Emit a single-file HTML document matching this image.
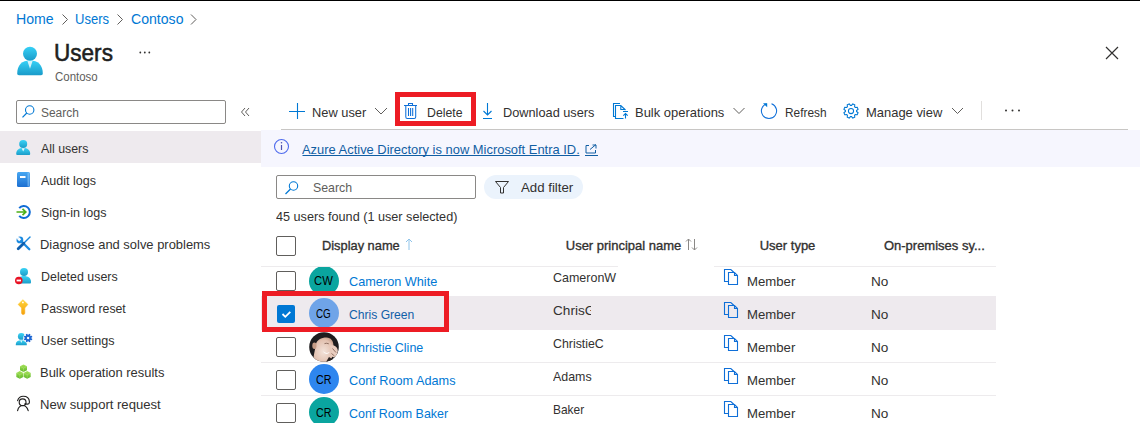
<!DOCTYPE html>
<html><head><meta charset="utf-8"><style>
html,body{margin:0;padding:0;}
body{width:1140px;height:423px;position:relative;overflow:hidden;background:#fff;font-family:"Liberation Sans",sans-serif;}
.t{position:absolute;white-space:nowrap;line-height:0;transform-origin:0 0;}
.a{position:absolute;}
svg{position:absolute;overflow:visible;}
</style></head><body>
<div class="a" style="left:0;top:0;width:1140px;height:1px;background:#000"></div>
<!-- header icon -->
<svg style="left:17px;top:46px" width="26" height="30" viewBox="0 0 26 30">
 <defs><linearGradient id="gU" x1="0" y1="0" x2="0" y2="1"><stop offset="0" stop-color="#36d1f7"/><stop offset="1" stop-color="#1a9bc9"/></linearGradient></defs>
 <circle cx="13" cy="7.7" r="7" fill="url(#gU)"/>
 <path d="M0.2 27.5 C0.2 19 5 14.5 13 14.5 C21 14.5 25.8 19 25.8 27.5 C25.8 28.6 25 29.2 24 29.2 H2 C1 29.2 0.2 28.6 0.2 27.5Z" fill="url(#gU)"/>
 <path d="M10.4 15 L13 22.8 L15.6 15Z" fill="#e8f8fd" opacity="0.9"/>
</svg>
<!-- ellipsis title -->
<svg style="left:139px;top:51px" width="12" height="3" viewBox="0 0 12 3"><circle cx="1.3" cy="1.5" r="0.9" fill="#323130"/><circle cx="5.8" cy="1.5" r="0.9" fill="#323130"/><circle cx="10.3" cy="1.5" r="0.9" fill="#323130"/></svg>
<!-- breadcrumb chevrons -->
<svg style="left:0;top:0" width="1" height="1">
 <path d="M62.5 14.5 L67.5 19.5 L62.5 24.5" fill="none" stroke="#605e5c" stroke-width="1"/>
 <path d="M117.5 14.5 L122.5 19.5 L117.5 24.5" fill="none" stroke="#605e5c" stroke-width="1"/>
 <path d="M191 14.5 L196 19.5 L191 24.5" fill="none" stroke="#605e5c" stroke-width="1"/>
</svg>
<!-- close X -->
<svg style="left:0;top:0" width="1" height="1"><path d="M1106 47 L1118 59 M1118 47 L1106 59" stroke="#323130" stroke-width="1.2"/></svg>
<!-- sidebar search -->
<div class="a" style="left:16px;top:100px;width:208px;height:22px;border:1px solid #8a8886;border-radius:2px"></div>
<svg style="left:0;top:0" width="1" height="1"><circle cx="29.7" cy="110" r="4.2" fill="none" stroke="#0078d4" stroke-width="1.1"/><path d="M26.8 113 L22.5 117.3" stroke="#0078d4" stroke-width="1.2"/></svg>
<!-- collapse chevrons -->
<svg style="left:0;top:0" width="1" height="1"><path d="M245 108 L241.5 112 L245 116 M249 108 L245.5 112 L249 116" fill="none" stroke="#605e5c" stroke-width="1"/></svg>
<!-- sidebar selected -->
<div class="a" style="left:0;top:131px;width:261px;height:32px;background:#eeeaee"></div>
<!-- toolbar -->
<div class="a" style="left:281px;top:129px;width:847px;height:1px;background:#c8c6c4"></div>
<svg style="left:0;top:0" width="1" height="1">
 <path d="M297.5 103 V119 M289 111.5 H305" stroke="#0078d4" stroke-width="1.1"/>
 <path d="M375 108 L381 114 L387 108" fill="none" stroke="#605e5c" stroke-width="1"/>
 <!-- trash -->
 <path d="M404 105.5 H417 M408.5 105.5 V103.5 H412.5 V105.5 M405.8 105.5 V117 Q405.8 118.5 407.3 118.5 H414.2 Q415.7 118.5 415.7 117 V105.5 M408.5 108 V116 M410.6 108 V116 M412.7 108 V116" fill="none" stroke="#0f6fd8" stroke-width="1.05"/>
 <!-- download -->
 <path d="M487.5 103 V115 M483.5 111 L487.5 115 L491.5 111 M483 118.5 H492" fill="none" stroke="#0078d4" stroke-width="1.1"/>
 <!-- bulk ops -->
 <path d="M615 116.5 H613.5 V103.5 H620" fill="none" stroke="#0078d4" stroke-width="1.1"/>
 <path d="M623.5 118.5 H615.5 V105.5 H620.8 L625.5 110 M620.8 105.5 V109.5 H625.5 M623 111.5 H628 M625.5 118.5 V113.5 M623.3 115.7 L625.5 113.5 L627.7 115.7" fill="none" stroke="#0078d4" stroke-width="1.1"/>
 <path d="M733.5 108 L739 113.5 L744.5 108" fill="none" stroke="#605e5c" stroke-width="1"/>
 <!-- refresh -->
 <path d="M771.5 103.8 A7.6 7.6 0 1 1 766.5 103.8" fill="none" stroke="#0f6fd8" stroke-width="1.05"/>
 <path d="M763 103.2 H767.2 V107.2Z" fill="#0078d4"/>
 <path d="M952 108 L957.5 113.5 L963 108" fill="none" stroke="#605e5c" stroke-width="1"/>
 <path d="M981.5 101 V120" stroke="#e1dfdd" stroke-width="1"/>
 <circle cx="1006" cy="110.5" r="1" fill="#323130"/><circle cx="1012.5" cy="110.5" r="1" fill="#323130"/><circle cx="1019" cy="110.5" r="1" fill="#323130"/>
</svg>
<svg style="left:843.3px;top:102.7px" width="16" height="16" viewBox="0 0 16 16"><g transform="rotate(22.5 8 8)"><path d="M13.35 6.35 L15.22 6.91 L15.22 9.09 L13.35 9.65 L12.95 10.62 L13.87 12.34 L12.34 13.87 L10.62 12.95 L9.65 13.35 L9.09 15.22 L6.91 15.22 L6.35 13.35 L5.38 12.95 L3.66 13.87 L2.13 12.34 L3.05 10.62 L2.65 9.65 L0.78 9.09 L0.78 6.91 L2.65 6.35 L3.05 5.38 L2.13 3.66 L3.66 2.13 L5.38 3.05 L6.35 2.65 L6.91 0.78 L9.09 0.78 L9.65 2.65 L10.62 3.05 L12.34 2.13 L13.87 3.66 L12.95 5.38Z" fill="none" stroke="#0078d4" stroke-width="1.05"/></g><circle cx="8" cy="8" r="2.6" fill="none" stroke="#0078d4" stroke-width="1.05"/></svg>
<!-- info bar -->
<div class="a" style="left:261px;top:130px;width:879px;height:37px;background:#f6f6fe"></div>
<svg style="left:0;top:0" width="1" height="1">
 <circle cx="281.5" cy="146.5" r="7" fill="none" stroke="#4f6bed" stroke-width="1.1"/>
 <path d="M281.5 145 V150" stroke="#4f52b2" stroke-width="1.2"/><circle cx="281.5" cy="142.7" r="0.8" fill="#4f52b2"/>
 <path d="M302.5 155.5 H579.5 M585 155.5 H598" stroke="#115ea3" stroke-width="1"/>
 <path d="M589 145.5 H586 V153 H595.5 V150 M590 149.5 L596 144.5 M592.5 145 H596 V148.5" fill="none" stroke="#115ea3" stroke-width="1"/>
</svg>
<!-- filter search -->
<div class="a" style="left:276px;top:175px;width:198px;height:22px;border:1px solid #8a8886;border-radius:2px"></div>
<svg style="left:0;top:0" width="1" height="1"><circle cx="293.5" cy="186" r="4.2" fill="none" stroke="#0078d4" stroke-width="1.1"/><path d="M290.5 189 L285.5 194" stroke="#0078d4" stroke-width="1.2"/></svg>
<div class="a" style="left:484px;top:175px;width:99px;height:24px;border-radius:12px;background:#ebf3fc"></div>
<svg style="left:0;top:0" width="1" height="1"><path d="M495.5 181.5 H508.5 L503.5 187.5 V193 H500.5 V187.5Z" fill="none" stroke="#323130" stroke-width="1"/></svg>
<!-- table -->
<div class="a" style="left:261px;top:266px;width:357px;height:1px;background:#edebed"></div>
<div class="a" style="left:714px;top:266px;width:282px;height:1px;background:#edebed"></div>
<div class="a" style="left:261px;top:296px;width:735px;height:34px;background:#eeeaee"></div>
<div class="a" style="left:261px;top:362px;width:735px;height:1px;background:#edebed"></div>
<div class="a" style="left:261px;top:395px;width:735px;height:1px;background:#edebed"></div>
<svg style="left:0;top:0" width="1" height="1">
 <path d="M409 239 V250 M406 242 L409 239 L412 242" fill="none" stroke="#8fc4ea" stroke-width="1"/>
 <path d="M688.5 239 V250 M686 241.5 L688.5 239 L691 241.5 M694.5 239 V250 M692 247.5 L694.5 250 L697 247.5" fill="none" stroke="#8a8886" stroke-width="1"/>
</svg>
<div class="a" style="left:276px;top:236px;width:18px;height:18px;border:1px solid #605e5c;border-radius:2px"></div>
<div class="a" style="left:276px;top:271px;width:18px;height:18px;border:1px solid #605e5c;border-radius:2px"></div>
<div class="a" style="left:277px;top:305px;width:18px;height:18px;background:#0078d4;border-radius:2px"></div>
<svg style="left:0;top:0" width="1" height="1"><path d="M282.5 314 L285.3 316.8 L290.3 311.8" fill="none" stroke="#fff" stroke-width="1.8"/></svg>
<div class="a" style="left:276px;top:337px;width:18px;height:18px;border:1px solid #605e5c;border-radius:2px"></div>
<div class="a" style="left:276px;top:370px;width:18px;height:18px;border:1px solid #605e5c;border-radius:2px"></div>
<div class="a" style="left:276px;top:403px;width:18px;height:18px;border:1px solid #605e5c;border-radius:2px"></div>
<!-- avatars -->
<div class="a" style="left:309px;top:267px;width:30px;height:30px;overflow:hidden"><div class="a" style="left:0;top:-1px;width:30px;height:30px;border-radius:50%;background:#0aa59f"></div></div>
<div class="a" style="left:309px;top:298px;width:30px;height:30px;border-radius:50%;background:#6fa4e8"></div>
<svg style="left:309px;top:331.5px" width="30" height="30" viewBox="0 0 30 30">
 <defs><clipPath id="cc"><circle cx="15" cy="15" r="14.8"/></clipPath>
 <radialGradient id="sk" cx="0.5" cy="0.55" r="0.6"><stop offset="0" stop-color="#f3e3da"/><stop offset="0.75" stop-color="#e2c1b0"/><stop offset="1" stop-color="#c49a85"/></radialGradient></defs>
 <g clip-path="url(#cc)">
  <rect width="30" height="30" fill="#1d1c1e"/>
  <path d="M7 12 C8 8 12 5.5 17.5 5.5 C22 5.5 24.5 9 24.5 14 L25 20 C24 26 20 30 15 31 L4 31 C4 26 6 18 7 12Z" fill="url(#sk)"/>
  <ellipse cx="5.4" cy="13.8" rx="2.1" ry="3.3" fill="#c69c86"/>
  <path d="M15.5 11.6 Q17.5 10.8 19.8 11.8" stroke="#7a5a4c" stroke-width="0.8" fill="none"/>
  <path d="M14.3 19.3 C16.5 21.3 19 21.5 20.5 19.8 C20 22.5 15.5 22.8 14.3 19.3Z" fill="#fdfaf8"/>
  <path d="M21 14 C23.5 12.5 27 13.5 28.5 17 C29.5 20 28 24 25 25.5 L22 24 C23 21 23 17 21 14Z" fill="#e9cdbf"/>
  <path d="M23.5 16.5 L27 20.5 M22.5 21.5 L25.5 24" stroke="#6b4a3e" stroke-width="0.7"/>
  <path d="M20 25 L24 27.5 L21 30 L17 30Z" fill="#2a2322"/>
 </g>
</svg>
<div class="a" style="left:309px;top:364px;width:30px;height:30px;border-radius:50%;background:#2e86ef"></div>
<div class="a" style="left:309px;top:397px;width:30px;height:30px;border-radius:50%;background:#0aa59f"></div>
<!-- copy icons -->
<svg style="left:0;top:0" width="1" height="1">
 <g id="cp" fill="none" stroke="#0f6fd8" stroke-width="1.1" transform="translate(718,263)">
  <path d="M10.5 18.5 H6.5 V6.5 H12.8 L16 9.5"/>
  <path d="M10.5 9.5 H16.5 L19.5 12.5 V21.5 H10.5 Z M16.5 9.5 V12.5 H19.5"/>
 </g>
 <use href="#cp" y="33"/><use href="#cp" y="66"/><use href="#cp" y="99"/><use href="#cp" y="132"/>
</svg>
<svg style="left:0;top:0" width="1" height="1">
 <defs>
  <linearGradient id="gC" x1="0" y1="0" x2="0" y2="1"><stop offset="0" stop-color="#3ad3f6"/><stop offset="1" stop-color="#1b9cc8"/></linearGradient>
  <linearGradient id="gB" x1="0" y1="0" x2="0" y2="1"><stop offset="0" stop-color="#47a7f2"/><stop offset="1" stop-color="#1c6fd1"/></linearGradient>
  <linearGradient id="gK" x1="0" y1="0" x2="0" y2="1"><stop offset="0" stop-color="#ffd43b"/><stop offset="1" stop-color="#f5a10c"/></linearGradient>
  <linearGradient id="gG" x1="0" y1="0" x2="0" y2="1"><stop offset="0" stop-color="#a6e35a"/><stop offset="1" stop-color="#5fb52a"/></linearGradient>
 </defs>
 <!-- all users -->
 <g transform="translate(16,140)">
  <circle cx="7.2" cy="4" r="4" fill="url(#gC)"/>
  <path d="M0.2 13.8 C0.2 10 3 8 7.2 8 C11.4 8 14.2 10 14.2 13.8 C14.2 14.6 13.7 15 13 15 H1.4 C0.7 15 0.2 14.6 0.2 13.8Z" fill="url(#gC)"/>
  <path d="M5.6 8.3 L7.2 11.5 L8.8 8.3Z" fill="#e6f7fc"/>
 </g>
 <!-- audit logs -->
 <g transform="translate(17,172)">
  <rect x="0" y="0" width="13" height="15" rx="1.5" fill="url(#gB)"/>
  <rect x="10.5" y="0.5" width="2" height="14" fill="#8cc8f8" opacity="0.6"/>
  <rect x="3" y="4" width="5.5" height="2" fill="#fff"/>
 </g>
 <!-- sign-in logs -->
 <g transform="translate(16,205)">
  <path d="M3.2 3.2 A6 6 0 1 1 3.2 10.8" fill="none" stroke="#0f6cd6" stroke-width="2"/>
  <path d="M0.5 7 H10 M6.5 3.8 L9.8 7 L6.5 10.2" fill="none" stroke="#4caf17" stroke-width="1.7"/>
 </g>
 <!-- diagnose -->
 <g transform="translate(16,236)">
  <path d="M4.8 4.8 L13.3 13.3" stroke="#1b8ae0" stroke-width="2.3" stroke-linecap="round"/>
  <circle cx="3.9" cy="3.9" r="3.4" fill="#1b8ae0"/>
  <path d="M1.2 3.2 L3.2 1.2 L5.2 3.2 L3.2 5.2Z" fill="#fff"/>
  <path d="M0 1.5 L1.5 0 L3.2 1.2 L1.2 3.2Z" fill="#fff"/>
  <path d="M14 1 L7.5 7.5" stroke="#1b8ae0" stroke-width="1.4" stroke-linecap="round"/>
  <path d="M7.8 7.2 L2.2 12.8" stroke="#0f5fae" stroke-width="2.8" stroke-linecap="round"/>
 </g>
 <!-- deleted users -->
 <g transform="translate(15,268)">
  <circle cx="9" cy="4" r="4" fill="url(#gC)"/>
  <path d="M2 14 C2 10 4.8 8 9 8 C13.2 8 16 10 16 14 C16 15 15.5 15.5 14.8 15.5 H3 C2.4 15.5 2 15 2 14Z" fill="url(#gC)"/>
  <circle cx="3.8" cy="12.5" r="3.8" fill="#e81123"/>
  <rect x="1.6" y="11.6" width="4.4" height="1.8" fill="#fff"/>
 </g>
 <!-- password reset key -->
 <g transform="translate(18,299.5)">
  <path d="M4.9 0.2 L9.9 4.9 L6.8 8.4 V13.6 Q6.8 15 5.2 15 Q3.6 15 3.6 13.6 V8.4 L0.1 4.9Z" fill="url(#gK)" stroke="url(#gK)" stroke-width="0.6" stroke-linejoin="round"/>
  <circle cx="4.9" cy="2.9" r="0.9" fill="#fff"/>
 </g>
 <!-- user settings -->
 <g transform="translate(15.5,333)">
  <circle cx="5.8" cy="3.4" r="3.4" fill="url(#gC)"/>
  <path d="M0.3 11 C0.3 8.6 2.4 7.2 5.8 7.2 C9.2 7.2 11.3 8.6 11.3 11 V12.2 H0.3Z" fill="url(#gC)"/>
  <path d="M4.8 7.4 L5.8 10 L6.8 7.4Z" fill="#e6f7fc"/>
  <g transform="translate(12.6,5.0) rotate(22.5)"><circle r="4.9" fill="#fff"/><path d="M3.06 -0.94 L4.34 -0.72 L4.34 0.72 L3.06 0.94 L2.83 1.50 L3.58 2.56 L2.56 3.58 L1.50 2.83 L0.94 3.06 L0.72 4.34 L-0.72 4.34 L-0.94 3.06 L-1.50 2.83 L-2.56 3.58 L-3.58 2.56 L-2.83 1.50 L-3.06 0.94 L-4.34 0.72 L-4.34 -0.72 L-3.06 -0.94 L-2.83 -1.50 L-3.58 -2.56 L-2.56 -3.58 L-1.50 -2.83 L-0.94 -3.06 L-0.72 -4.34 L0.72 -4.34 L0.94 -3.06 L1.50 -2.83 L2.56 -3.58 L3.58 -2.56 L2.83 -1.50Z" fill="#1f68d3"/><circle cx="0" cy="0" r="1.2" fill="#fff"/></g>
 </g>
 <!-- bulk operation results cubes -->
 <g transform="translate(16,364.5)">
  <path d="M7.5 0 L11 1.8 V5.8 L7.5 7.6 L4 5.8 V1.8Z" fill="url(#gG)"/>
  <path d="M3.8 6.6 L7.3 8.4 V12.4 L3.8 14.2 L0.3 12.4 V8.4Z" fill="url(#gG)"/>
  <path d="M11.2 6.6 L14.7 8.4 V12.4 L11.2 14.2 L7.7 12.4 V8.4Z" fill="url(#gG)"/>
  <path d="M4 1.8 L7.5 3.6 L11 1.8 M7.5 3.6 V7.6 M0.3 8.4 L3.8 10.2 L7.3 8.4 M3.8 10.2 V14.2 M7.7 8.4 L11.2 10.2 L14.7 8.4 M11.2 10.2 V14.2" fill="none" stroke="#c6f08a" stroke-width="0.5" opacity="0.7"/>
 </g>
 <!-- support -->
 <g transform="translate(12,392)" fill="none" stroke="#201f1e" stroke-width="1.15" stroke-linecap="round">
  <circle cx="10.6" cy="10.3" r="3.4"/>
  <path d="M5.6 8.6 C6.5 5.5 8.6 4.2 11.2 4.2 C14.6 4.2 17.2 6.3 17.4 9.5 C17.6 11.6 16.5 12.1 15.2 12.1 L12.9 11.9"/>
  <path d="M5.6 18.6 C6.4 15.2 8.4 13.5 10.8 13.5 C13.2 13.5 15.2 15.2 16.2 18.6"/>
 </g>
</svg>

<div class="t" style="left:15.93px;top:19.00px;font-size:14px;color:#0078d4;transform:scaleX(1.0090);">Home</div>
<div class="t" style="left:75.03px;top:19.00px;font-size:14px;color:#0078d4;transform:scaleX(0.9298);">Users</div>
<div class="t" style="left:131.22px;top:19.00px;font-size:14px;color:#0078d4;transform:scaleX(1.0062);">Contoso</div>
<div class="t" style="left:54.02px;top:53.00px;font-size:23.5px;color:#201f1e;transform:scaleX(0.9601);-webkit-text-stroke:0.55px #201f1e;">Users</div>
<div class="t" style="left:54.92px;top:77.00px;font-size:12px;color:#605e5c;transform:scaleX(0.9551);">Contoso</div>
<div class="t" style="left:41.02px;top:113.00px;font-size:12.5px;color:#605e5c;transform:scaleX(0.9554);">Search</div>
<div class="t" style="left:41.08px;top:149.00px;font-size:13px;color:#323130;transform:scaleX(0.9505);">All users</div>
<div class="t" style="left:41.08px;top:181.00px;font-size:13px;color:#323130;transform:scaleX(0.9650);">Audit logs</div>
<div class="t" style="left:41.08px;top:213.00px;font-size:13px;color:#323130;transform:scaleX(0.9650);">Sign-in logs</div>
<div class="t" style="left:40.09px;top:245.00px;font-size:13px;color:#323130;transform:scaleX(0.9944);">Diagnose and solve problems</div>
<div class="t" style="left:40.72px;top:277.00px;font-size:13px;color:#323130;transform:scaleX(0.9558);">Deleted users</div>
<div class="t" style="left:40.73px;top:309.00px;font-size:13px;color:#323130;transform:scaleX(0.9464);">Password reset</div>
<div class="t" style="left:40.71px;top:341.00px;font-size:13px;color:#323130;transform:scaleX(0.9693);">User settings</div>
<div class="t" style="left:40.08px;top:373.00px;font-size:13px;color:#323130;transform:scaleX(0.9953);">Bulk operation results</div>
<div class="t" style="left:40.07px;top:405.00px;font-size:13px;color:#323130;transform:scaleX(1.0055);">New support request</div>
<div class="t" style="left:312.11px;top:113.00px;font-size:13px;color:#323130;transform:scaleX(0.9872);">New user</div>
<div class="t" style="left:427.29px;top:113.00px;font-size:13px;color:#323130;transform:scaleX(0.9455);">Delete</div>
<div class="t" style="left:503.12px;top:113.00px;font-size:13px;color:#323130;transform:scaleX(0.9812);">Download users</div>
<div class="t" style="left:635.08px;top:113.00px;font-size:13px;color:#323130;transform:scaleX(0.9971);">Bulk operations</div>
<div class="t" style="left:785.07px;top:113.00px;font-size:13px;color:#323130;transform:scaleX(0.9118);">Refresh</div>
<div class="t" style="left:866.10px;top:113.00px;font-size:13px;color:#323130;transform:scaleX(0.9959);">Manage view</div>
<div class="t" style="left:302.08px;top:150.00px;font-size:13px;color:#115ea3;transform:scaleX(0.9934);">Azure Active Directory is now Microsoft Entra ID.</div>
<div class="t" style="left:313.00px;top:188.00px;font-size:13px;color:#605e5c;transform:scaleX(0.9499);">Search</div>
<div class="t" style="left:521.10px;top:188.00px;font-size:13px;color:#323130;transform:scaleX(1.0186);">Add filter</div>
<div class="t" style="left:276.04px;top:217.00px;font-size:13px;color:#323130;transform:scaleX(0.9729);">45 users found (1 user selected)</div>
<div class="t" style="left:321.73px;top:246.00px;font-size:13px;color:#323130;transform:scaleX(0.9866);-webkit-text-stroke:0.35px #323130;">Display name</div>
<div class="t" style="left:565.76px;top:246.00px;font-size:13px;color:#323130;-webkit-text-stroke:0.35px #323130;">User principal name</div>
<div class="t" style="left:759.72px;top:246.00px;font-size:13px;color:#323130;-webkit-text-stroke:0.35px #323130;">User type</div>
<div class="t" style="left:883.92px;top:246.00px;font-size:13px;color:#323130;-webkit-text-stroke:0.35px #323130;">On-premises sy...</div>
<div class="t" style="left:349.14px;top:282.00px;font-size:13px;color:#0078d4;transform:scaleX(0.9777);">Cameron White</div>
<div class="t" style="left:553.06px;top:278.00px;font-size:13px;color:#323130;transform:scaleX(0.9600);">CameronW</div>
<div class="t" style="left:746.95px;top:282.00px;font-size:13px;color:#323130;transform:scaleX(1.0126);">Member</div>
<div class="t" style="left:870.89px;top:282.00px;font-size:13px;color:#323130;transform:scaleX(1.0453);">No</div>
<div class="t" style="left:349.14px;top:315.00px;font-size:13px;color:#1160a8;transform:scaleX(0.9325);">Chris Green</div>
<div class="t" style="left:553.06px;top:311.00px;font-size:13px;color:#323130;transform:scaleX(1.0462);">ChrisG</div>
<div class="t" style="left:746.95px;top:315.00px;font-size:13px;color:#323130;transform:scaleX(1.0126);">Member</div>
<div class="t" style="left:870.89px;top:315.00px;font-size:13px;color:#323130;transform:scaleX(1.0453);">No</div>
<div class="t" style="left:349.14px;top:348.00px;font-size:13px;color:#0078d4;transform:scaleX(0.9611);">Christie Cline</div>
<div class="t" style="left:553.06px;top:344.00px;font-size:13px;color:#323130;transform:scaleX(0.9500);">ChristieC</div>
<div class="t" style="left:746.95px;top:348.00px;font-size:13px;color:#323130;transform:scaleX(1.0126);">Member</div>
<div class="t" style="left:870.89px;top:348.00px;font-size:13px;color:#323130;transform:scaleX(1.0453);">No</div>
<div class="t" style="left:349.14px;top:381.00px;font-size:13px;color:#0078d4;transform:scaleX(0.9761);">Conf Room Adams</div>
<div class="t" style="left:553.06px;top:377.00px;font-size:13px;color:#323130;transform:scaleX(0.9550);">Adams</div>
<div class="t" style="left:746.95px;top:381.00px;font-size:13px;color:#323130;transform:scaleX(1.0126);">Member</div>
<div class="t" style="left:870.89px;top:381.00px;font-size:13px;color:#323130;transform:scaleX(1.0453);">No</div>
<div class="t" style="left:349.14px;top:414.00px;font-size:13px;color:#0078d4;transform:scaleX(0.9599);">Conf Room Baker</div>
<div class="t" style="left:552.94px;top:410.00px;font-size:13px;color:#323130;transform:scaleX(0.9194);">Baker</div>
<div class="t" style="left:746.95px;top:414.00px;font-size:13px;color:#323130;transform:scaleX(1.0126);">Member</div>
<div class="t" style="left:870.89px;top:414.00px;font-size:13px;color:#323130;transform:scaleX(1.0453);">No</div>
<div class="t" style="left:314.10px;top:281.00px;font-size:12.5px;color:#000;transform:scaleX(0.9008);">CW</div>
<div class="t" style="left:316.10px;top:314.00px;font-size:12.5px;color:#000;transform:scaleX(0.7878);">CG</div>
<div class="t" style="left:316.08px;top:380.00px;font-size:12.5px;color:#000;transform:scaleX(0.8562);">CR</div>
<div class="t" style="left:316.08px;top:413.00px;font-size:12.5px;color:#000;transform:scaleX(0.8562);">CR</div>
<div class="a" style="left:395px;top:92px;width:71px;height:24px;border:5px solid #ed1c24"></div>
<div class="a" style="left:262px;top:291px;width:177px;height:31px;border:5px solid #ed1c24"></div>
<div class="a" style="left:590.5px;top:300px;width:8px;height:24px;background:#eeeaee"></div>

</body></html>
